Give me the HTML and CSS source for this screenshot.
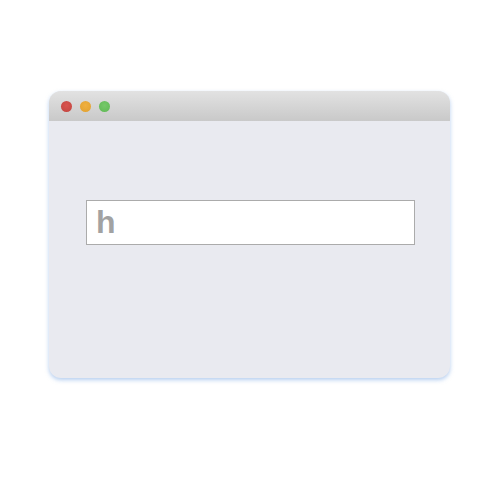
FILE: index.html
```html
<!DOCTYPE html>
<html>
<head>
<meta charset="utf-8">
<link rel="stylesheet" href="styles.css">
</head>
<body>
<div class="page">
  <div class="window">
    <div class="titlebar">
      <span class="dot red"></span>
      <span class="dot yellow"></span>
      <span class="dot green"></span>
    </div>
    <div class="content">
      <div class="field">h</div>
    </div>
  </div>
</div>
</body>
</html>
```
FILE: styles.css
```css
html, body {
  margin: 0;
  padding: 0;
  background: #ffffff;
}
.page {
  width: 500px;
  height: 500px;
  padding: 91px 0 0 49px;
  box-sizing: border-box;
}
.window {
  width: 401px;
  height: 287px;
  border-radius: 12px;
  background: #e9eaf0;
  box-shadow: 0 2px 4px rgba(120, 165, 225, 0.55);
  overflow: hidden;
  display: flex;
  flex-direction: column;
}
.titlebar {
  height: 30px;
  flex: none;
  background: linear-gradient(#e2e2e2, #c9c9c9);
  display: flex;
  align-items: center;
  gap: 8px;
  padding-left: 12px;
}
.dot {
  width: 11px;
  height: 11px;
  border-radius: 50%;
}
.red { background: radial-gradient(circle at 50% 40%, #d9544e, #c0443f); }
.yellow { background: radial-gradient(circle at 50% 40%, #f0b040, #e0a030); }
.green { background: radial-gradient(circle at 50% 40%, #76c86a, #5fb854); }
.content {
  padding: 79px 0 0 37px;
}
.field {
  width: 318px;
  height: 43px;
  border: 1px solid #ababab;
  background: #ffffff;
  font-family: "Liberation Sans", Arial, sans-serif;
  font-size: 32px;
  font-weight: bold;
  line-height: 43px;
  color: #a2a2a2;
  padding-left: 9px;
  box-sizing: content-box;
}
```
